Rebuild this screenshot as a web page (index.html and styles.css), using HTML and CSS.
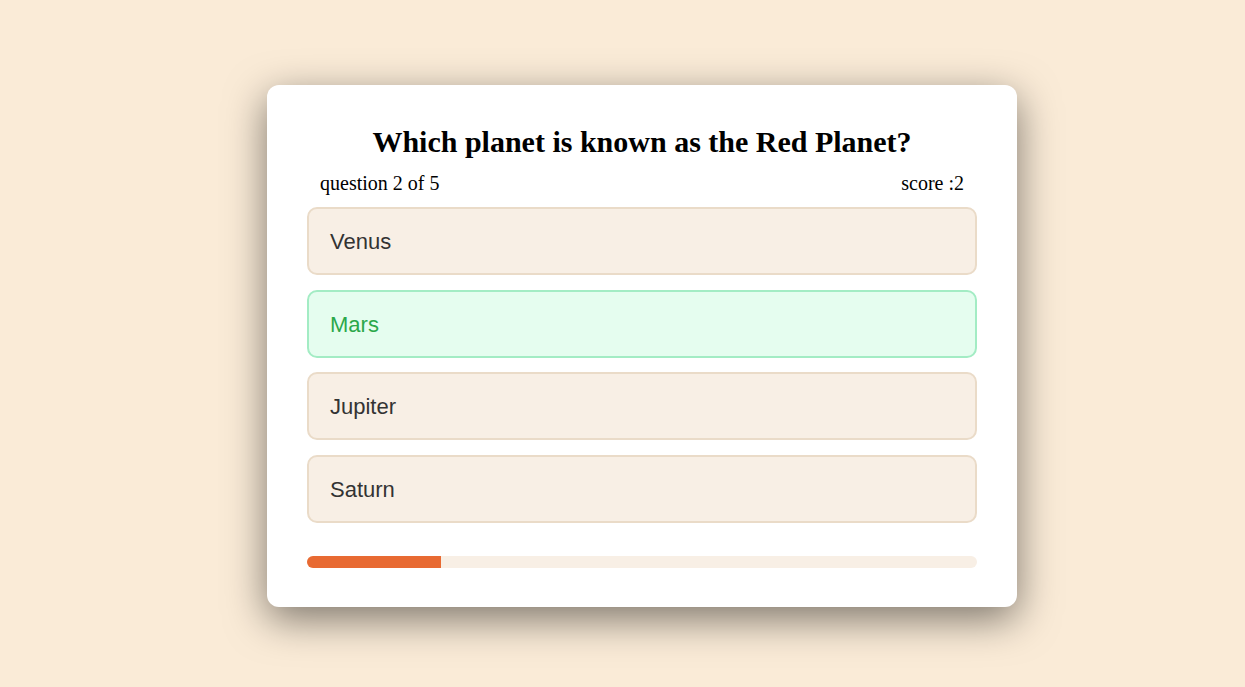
FILE: index.html
```html
<!DOCTYPE html>
<html>
<head>
<meta charset="utf-8">
<link rel="stylesheet" href="styles.css">
</head>
<body>
<div class="page">
  <div class="card">
    <h1 class="title">Which planet is known as the Red Planet?</h1>
    <div class="meta">
      <span>question 2 of 5</span>
      <span>score :2</span>
    </div>
    <div class="options">
      <div class="option">Venus</div>
      <div class="option correct">Mars</div>
      <div class="option">Jupiter</div>
      <div class="option">Saturn</div>
    </div>
    <div class="progress"><div class="fill" style="width:20%"></div></div>
  </div>
</div>
</body>
</html>
```
FILE: styles.css
```css
html, body {
  margin: 0;
  padding: 0;
}
body {
  background: #faebd7;
  font-family: "Liberation Serif", "Times New Roman", serif;
}
.page {
  min-height: 687px;
  display: flex;
  align-items: center;
  justify-content: center;
  padding-left: 39px;
  padding-top: 5px;
  box-sizing: border-box;
}
.card {
  width: 750px;
  box-sizing: border-box;
  background: #fff;
  border-radius: 12px;
  padding: 40px 40px 39px;
  box-shadow: 0 12px 40px rgba(0, 0, 0, 0.5);
}
.title {
  margin: 0;
  text-align: center;
  font-size: 30px;
  line-height: 34px;
  font-weight: bold;
  color: #000;
}
.meta {
  display: flex;
  justify-content: space-between;
  padding: 0 13px;
  margin-top: 13px;
  font-size: 20px;
  line-height: 23px;
  color: #000;
}
.options {
  display: flex;
  flex-direction: column;
  gap: 14.67px;
  margin-top: 12px;
}
.option {
  height: 68px;
  box-sizing: border-box;
  border: 2px solid #eadbc8;
  background: #f8efe5;
  border-radius: 10px;
  display: flex;
  align-items: center;
  padding-left: 21px;
  padding-top: 2px;
  font-family: "Liberation Sans", Arial, sans-serif;
  font-size: 22px;
  color: #333;
}
.option.correct {
  background: #e5fdef;
  border-color: #a3ecc4;
  color: #2ba84a;
}
.progress {
  margin-top: 33px;
  height: 12px;
  background: #f8efe5;
  border-radius: 6px;
  overflow: hidden;
}
.fill {
  height: 100%;
  background: #e86a32;
}
```
